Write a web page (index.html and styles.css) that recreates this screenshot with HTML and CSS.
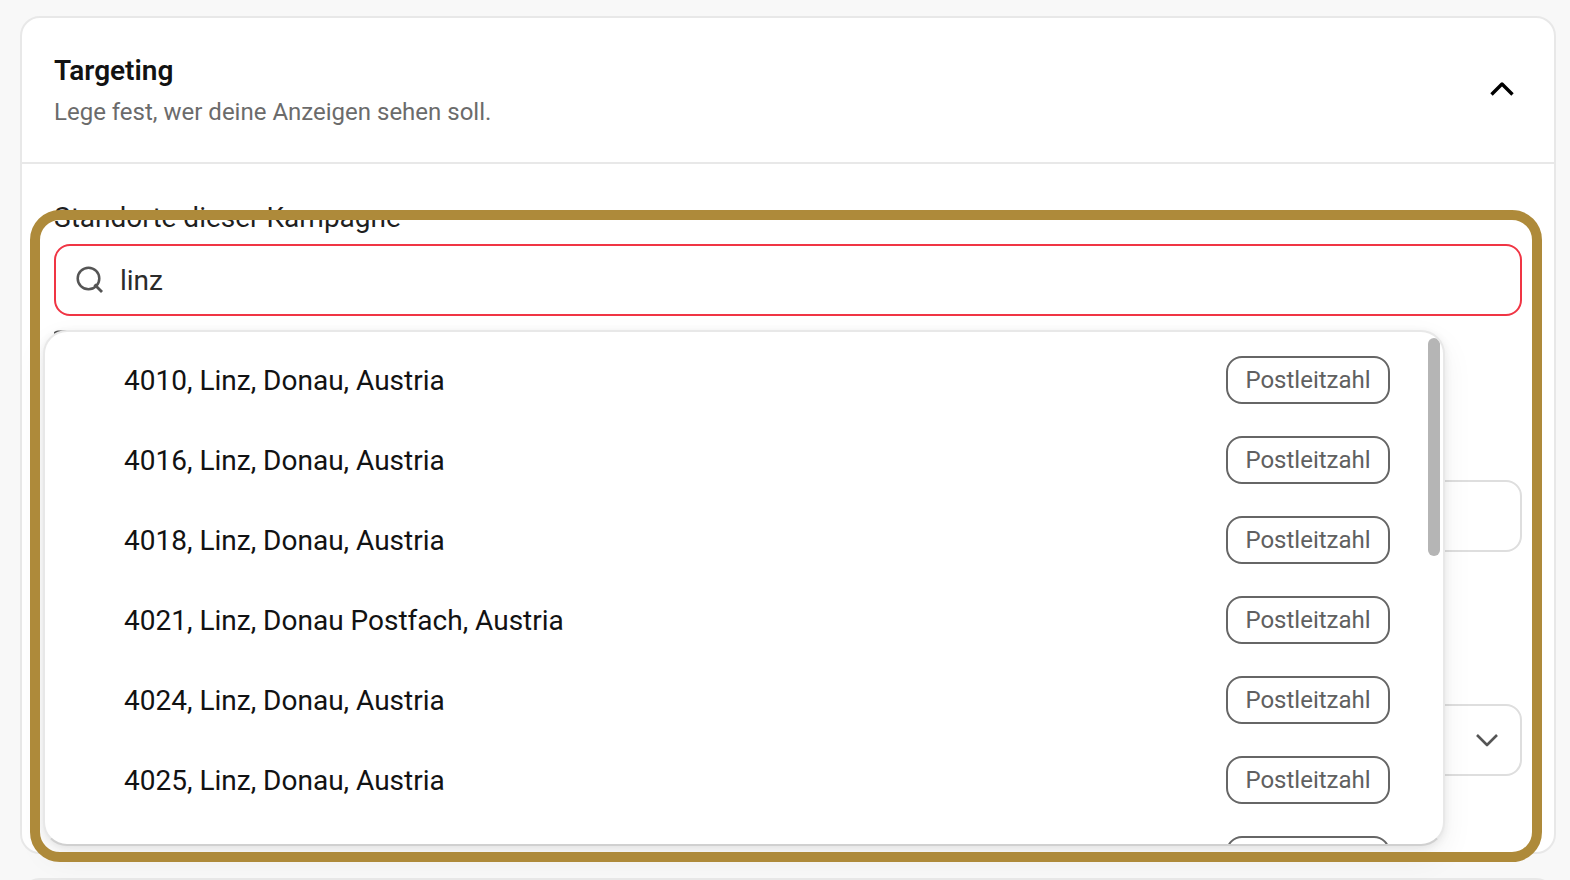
FILE: index.html
```html
<!DOCTYPE html>
<html lang="de">
<head>
<meta charset="utf-8">
<meta name="viewport" content="width=device-width, initial-scale=1">
<title>Targeting</title>
<link rel="stylesheet" href="styles.css">
</head>
<body>
<main class="page">
  <section class="card">
    <header class="card-header">
      <div class="heading">
        <h2 class="title">Targeting</h2>
        <p class="subtitle">Lege fest, wer deine Anzeigen sehen soll.</p>
      </div>
      <button class="collapse" type="button" aria-label="Targeting einklappen" aria-expanded="true">
        <svg class="icon" viewBox="0 0 28 28" aria-hidden="true"><path d="M3.500 19.500 14 9l10.500 10.500" fill="none" stroke="currentColor" stroke-width="3.400" stroke-linejoin="round"/></svg>
      </button>
    </header>
    <div class="card-body">
      <div class="field location">
        <label class="label" for="location">Standorte dieser Kampagne</label>
        <div class="search">
          <svg class="icon" viewBox="0 0 28 28" aria-hidden="true"><circle cx="12.500" cy="12.500" r="10.800" fill="none" stroke="currentColor" stroke-width="2.500"/><path d="m18.500 18.500 7.500 7.500" fill="none" stroke="currentColor" stroke-width="2.800"/></svg>
          <input class="search-input" id="location" type="text" value="linz" autocomplete="off" aria-controls="results">
        </div>
        <svg class="hint-icon" viewBox="0 0 24 24" aria-hidden="true"><rect x="0" y="2" width="23" height="21" rx="4" fill="none" stroke="currentColor" stroke-width="3"/></svg>
        <div class="dropdown">
          <ul class="results" id="results" role="listbox" aria-label="Standorte">
            <li class="result" role="option"><span class="place">4010, Linz, Donau, Austria</span><span class="badge">Postleitzahl</span></li>
            <li class="result" role="option"><span class="place">4016, Linz, Donau, Austria</span><span class="badge">Postleitzahl</span></li>
            <li class="result" role="option"><span class="place">4018, Linz, Donau, Austria</span><span class="badge">Postleitzahl</span></li>
            <li class="result" role="option"><span class="place">4021, Linz, Donau Postfach, Austria</span><span class="badge">Postleitzahl</span></li>
            <li class="result" role="option"><span class="place">4024, Linz, Donau, Austria</span><span class="badge">Postleitzahl</span></li>
            <li class="result" role="option"><span class="place">4025, Linz, Donau, Austria</span><span class="badge">Postleitzahl</span></li>
            <li class="result" role="option"><span class="place"></span><span class="badge"></span></li>
          </ul>
          <span class="thumb"></span>
        </div>
      </div>
      <input class="control" type="text" aria-label="Zielgruppe">
      <div class="select">
        <select class="control" aria-label="Auswahl"><option></option></select>
        <svg class="select-arrow" viewBox="0 0 24 24" aria-hidden="true"><path d="m2 7 10 10L22 7" fill="none" stroke="currentColor" stroke-width="2.600" stroke-linejoin="round"/></svg>
      </div>
      <div class="highlight"></div>
    </div>
  </section>
  <section class="card next-card"></section>
</main>
</body>
</html>
```
FILE: styles.css
```css
* {
  box-sizing: border-box;
}

body {
  margin: 0;
  background: #f8f8f8;
  color: #1f1f1f;
  font-family: Roboto, "Liberation Sans", sans-serif;
  font-size: 28px;
  line-height: 32px;
}

.page {
  display: flex;
  flex-direction: column;
  gap: 24px;
  height: 100vh;
  padding: 16px 14px 0 20px;
  overflow: hidden;
}

.card {
  flex: none;
  border: 2px solid #e8e8e8;
  border-radius: 20px;
  background: #fff;
}

.next-card {
  height: 80px;
}

.card-header {
  display: flex;
  align-items: center;
  justify-content: space-between;
  padding: 35px 38px 32px 32px;
  border-bottom: 2px solid #e8e8e8;
}

.title {
  margin: 0;
  color: #121212;
  font-size: 28px;
  font-weight: 600;
  line-height: 36px;
}

.subtitle {
  margin: 5px 0 0;
  color: #6b6b6b;
  font-size: 24px;
  line-height: 36px;
}

.collapse {
  display: flex;
  margin-bottom: 6px;
  padding: 0;
  border: 0;
  background: none;
  color: #000;
}

.icon {
  flex: none;
  width: 28px;
  height: 28px;
}

.card-body {
  position: relative;
  display: flex;
  flex-direction: column;
  padding: 36px 32px 76px;
}

.field {
  position: relative;
  display: flex;
  flex-direction: column;
  gap: 8px;
  margin-bottom: 164px;
}

.label {
  line-height: 36px;
}

.search {
  display: flex;
  align-items: center;
  gap: 16px;
  height: 72px;
  padding: 0 20px;
  border: 2px solid #f03544;
  border-radius: 16px;
  color: #555;
}

.search-input {
  flex: 1;
  min-width: 0;
  padding: 2px 0 0;
  border: 0;
  outline: 0;
  background: none;
  color: #2b2b2b;
  font: inherit;
}

.hint-icon {
  position: absolute;
  top: 130px;
  left: 0;
  width: 24px;
  height: 24px;
  color: #555;
}

.dropdown {
  position: absolute;
  z-index: 2;
  top: 130px;
  right: 77px;
  left: -11px;
  height: 516px;
  overflow: hidden;
  border: 2px solid #e8e8e8;
  border-bottom-color: #d0d0d0;
  border-radius: 24px;
  background: #fff;
  box-shadow: 0 2px 8px rgba(0, 0, 0, 0.08), 0 12px 32px rgba(0, 0, 0, 0.06);
}

.results {
  margin: 0;
  padding: 8px 53px 0 79px;
  list-style: none;
}

.result {
  display: flex;
  align-items: center;
  justify-content: space-between;
  height: 80px;
  color: #121212;
}

.place {
  padding-top: 2px;
}

.badge {
  width: 164px;
  height: 48px;
  border: 2px solid #666;
  border-radius: 16px;
  color: #606060;
  font-size: 24px;
  line-height: 44px;
  text-align: center;
}

.thumb {
  position: absolute;
  top: 6px;
  right: 3px;
  width: 12px;
  height: 218px;
  border-radius: 6px;
  background: #b5b5b5;
}

.control {
  width: 100%;
  height: 72px;
  padding: 0 20px;
  border: 2px solid #dedede;
  border-radius: 16px;
  background: #fff;
  font: inherit;
  appearance: none;
}

.select {
  position: relative;
  display: flex;
  margin-top: 152px;
}

.select-arrow {
  position: absolute;
  top: 24px;
  right: 23px;
  width: 24px;
  height: 24px;
  color: #555;
}

.highlight {
  position: absolute;
  z-index: 3;
  inset: 46px 12px -10px 8px;
  border: 10px solid #ae8a3a;
  border-radius: 30px;
  pointer-events: none;
}
```
